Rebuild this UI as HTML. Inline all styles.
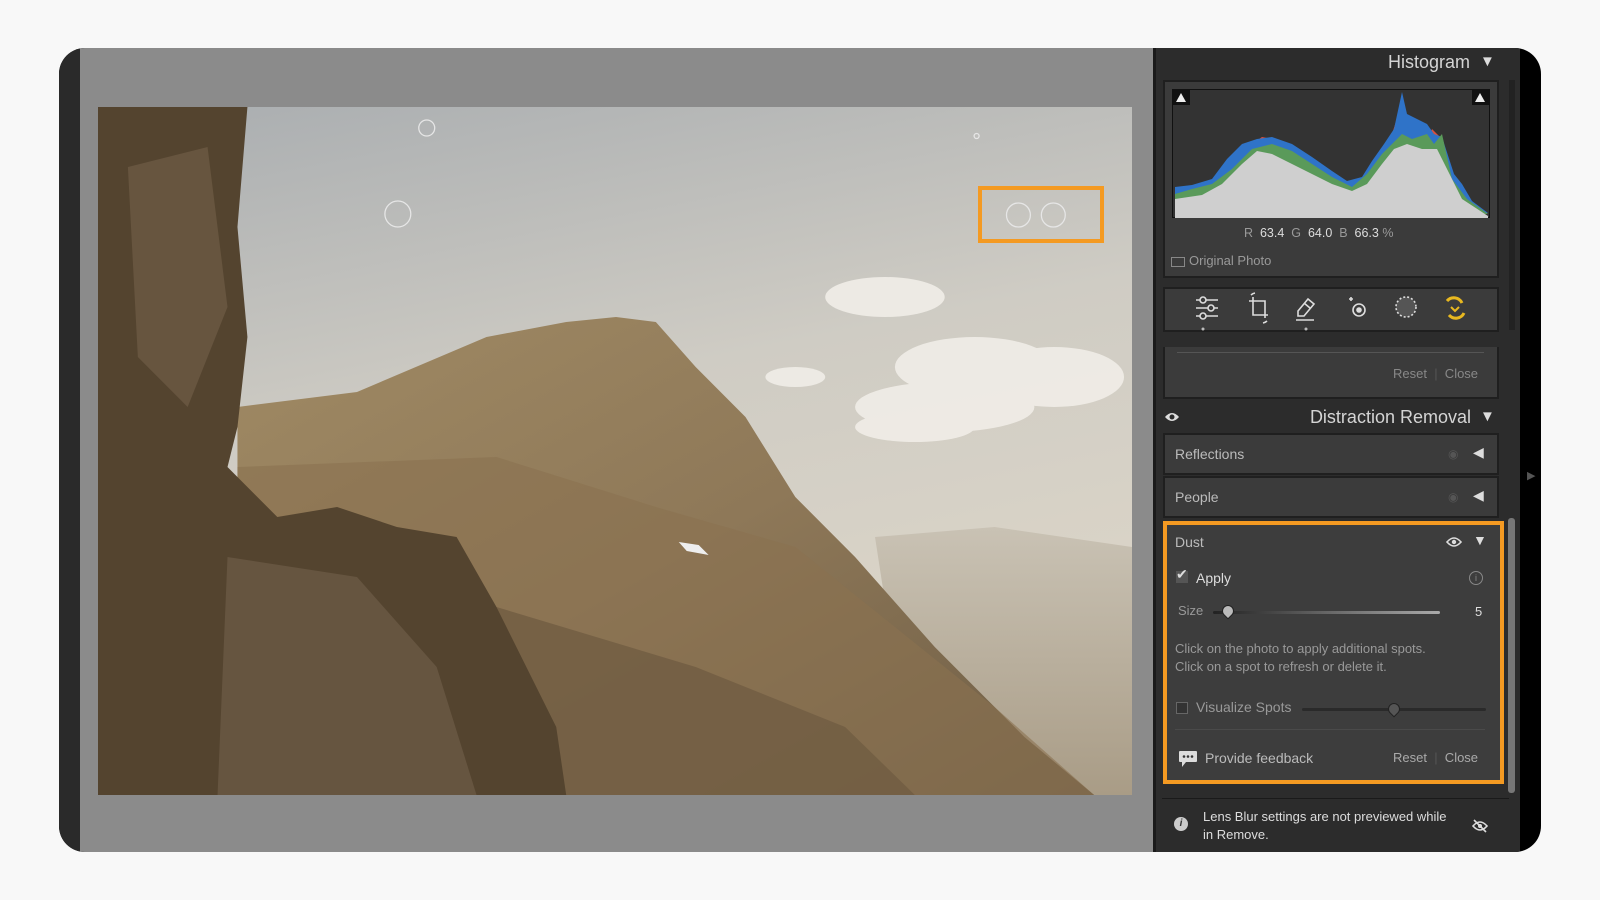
<!DOCTYPE html>
<html><head><meta charset="utf-8"><style>
*{margin:0;padding:0;box-sizing:border-box}
body{width:1600px;height:900px;background:#f8f8f8;font-family:"Liberation Sans",sans-serif;position:relative;overflow:hidden}
.abs{position:absolute}
.frame{left:59px;top:48px;width:1482px;height:804px;border-radius:26px;overflow:hidden;background:#000}
.t{color:#c9c9c9;font-size:14px;position:absolute;white-space:nowrap}
.box{position:absolute;background:#3b3b3b;border:2px solid #1f1f1f}
</style></head><body>
<div class="abs frame">
 <div class="abs" style="left:0;top:0;width:22px;height:804px;background:#2a2a2a"></div>
 <div class="abs" style="left:21px;top:0;width:1073px;height:804px;background:#8b8b8b"></div>
 <div class="abs" style="left:1094px;top:0;width:367px;height:804px;background:#2c2c2c;border-left:3px solid #1a1a1a"></div>
</div>
<!-- photo -->
<svg class="abs" style="left:98px;top:107px" width="1034" height="688" viewBox="0 0 1038 688" preserveAspectRatio="none">
 <defs>
  <linearGradient id="sky" x1="0" y1="0" x2="0.3" y2="1"><stop offset="0" stop-color="#a9adb0"/><stop offset=".5" stop-color="#cfccc4"/><stop offset="1" stop-color="#ddd6c8"/></linearGradient>
  <linearGradient id="mt" x1="0" y1="0" x2="1" y2="1"><stop offset="0" stop-color="#a08a64"/><stop offset=".5" stop-color="#8e7858"/><stop offset="1" stop-color="#6e5d45"/></linearGradient>
  <linearGradient id="haze" x1="0" y1="0" x2="0" y2="1"><stop offset="0" stop-color="#c9c2b4"/><stop offset="1" stop-color="#a99c86"/></linearGradient>
 </defs>
 <rect width="1038" height="688" fill="url(#sky)"/>
 <g fill="#f1eee8" opacity=".9">
  <ellipse cx="790" cy="190" rx="60" ry="20"/><ellipse cx="880" cy="260" rx="80" ry="30"/><ellipse cx="850" cy="300" rx="90" ry="25"/><ellipse cx="960" cy="270" rx="70" ry="30"/><ellipse cx="820" cy="320" rx="60" ry="15"/><ellipse cx="700" cy="270" rx="30" ry="10"/>
 </g>
 <path d="M780 430 L900 420 L1038 440 L1038 688 L820 688 Z" fill="url(#haze)"/>
 <path d="M140 300 L260 285 L390 230 L470 215 L520 210 L560 215 L600 260 L650 310 L700 390 L760 450 L840 540 L930 630 L1000 688 L140 688 Z" fill="url(#mt)"/>
 <path d="M140 360 L400 350 L560 400 L700 440 L800 520 L900 600 L1000 688 L140 688Z" fill="#8a7250" opacity=".6"/>
 <path d="M140 520 L400 500 L600 560 L750 620 L820 688 L140 688Z" fill="#705d42" opacity=".8"/>
 <path d="M0 0 L150 0 L140 120 L150 230 L140 320 L130 360 L180 410 L240 400 L300 420 L360 430 L400 500 L430 560 L460 620 L470 688 L0 688 Z" fill="#54442f"/>
 <path d="M30 60 L110 40 L130 200 L90 300 L40 250Z" fill="#7a6650" opacity=".5"/>
 <path d="M130 450 L260 470 L340 560 L380 688 L120 688Z" fill="#665540"/>
 <path d="M583 435 l20 3 l10 10 l-22 -4z" fill="#eee"/>
 <g fill="none" stroke="#e6e6e6" stroke-width="1.3">
  <circle cx="330" cy="21" r="8"/><circle cx="301" cy="107" r="13"/><circle cx="882" cy="29" r="2.5"/>
  <circle cx="924" cy="108" r="12"/><circle cx="959" cy="108" r="12"/>
 </g>
</svg>
<div class="abs" style="left:978px;top:186px;width:126px;height:57px;border:4px solid #f49a22"></div>
<!-- right panel -->
<div class="t" style="right:130px;top:52px;font-size:18px;color:#d4d4d4">Histogram</div>
<div class="t" style="left:1480px;top:53px;font-size:15px;color:#ddd">▼</div>
<div class="box" style="left:1163px;top:80px;width:336px;height:198px"></div>
<svg class="abs" style="left:1172px;top:89px" width="318" height="129" viewBox="0 0 318 129">
 <rect width="318" height="129" fill="#333" stroke="#111" stroke-width="2"/>
 <path d="M3 125 L3 100 L20 98 L40 95 L60 80 L80 55 L90 48 L100 50 L120 60 L140 70 L160 85 L180 95 L190 95 L200 80 L210 60 L220 45 L228 20 L232 30 L240 40 L255 55 L260 40 L270 50 L280 90 L290 100 L300 115 L316 125 Z" fill="#d85040"/>
 <path d="M3 125 L3 98 L20 96 L40 90 L55 70 L70 55 L85 50 L100 48 L120 55 L140 68 L160 82 L175 92 L190 88 L200 72 L212 55 L222 40 L230 3 L235 25 L245 30 L255 35 L262 45 L270 48 L282 85 L290 95 L300 112 L316 124 Z" fill="#2f73c8"/>
 <path d="M3 125 L3 105 L20 100 L40 95 L60 80 L80 60 L100 55 L120 62 L140 75 L160 88 L180 98 L195 85 L210 65 L220 55 L230 45 L240 50 L255 45 L262 55 L270 45 L280 90 L295 110 L316 125 Z" fill="#5a9a5a"/>
 <path d="M3 125 L3 110 L30 106 L50 95 L70 75 L85 62 L100 65 L120 75 L140 85 L160 95 L180 102 L195 95 L210 75 L222 60 L235 55 L250 60 L265 60 L275 80 L290 110 L316 127 L316 129 L3 129Z" fill="#cfcfcf"/>
 <rect x="1" y="1" width="17" height="15" fill="#111"/><path d="M4 13 L9 4 L14 13Z" fill="#eee"/>
 <rect x="300" y="1" width="17" height="15" fill="#111"/><path d="M303 13 L308 4 L313 13Z" fill="#eee"/>
</svg>
<div class="t" style="left:1244px;top:226px;font-size:12.5px;color:#9a9a9a">R &nbsp;<b style="color:#ddd;font-weight:normal">63.4</b> &nbsp;G &nbsp;<span style="color:#ddd">64.0</span> &nbsp;B &nbsp;<span style="color:#ddd">66.3</span> %</div>
<div class="abs" style="left:1171px;top:257px;width:14px;height:10px;border:1px solid #888"></div>
<div class="t" style="left:1189px;top:253px;font-size:13px;color:#999">Original Photo</div>
<div class="box" style="left:1163px;top:287px;width:336px;height:45px"></div>
<svg class="abs" style="left:1163px;top:287px" width="336" height="45" viewBox="0 0 336 45" fill="none" stroke="#ddd" stroke-width="1.6">
 <path d="M33 13h22M33 21h22M33 29h22"/><circle cx="40" cy="13" r="3" fill="#3b3b3b"/><circle cx="48" cy="21" r="3" fill="#3b3b3b"/><circle cx="40" cy="29" r="3" fill="#3b3b3b"/>
 <path d="M90 10v18h15M86 14h16v17"/><path d="M88 8a8 8 0 0 1 4-2M104 34a8 8 0 0 1-4 2"/>
 <path d="M135 24l10-12 6 5-10 12h-6zM133 33h18" fill="none"/><path d="M141 16l6 5" />
 <circle cx="196" cy="23" r="6"/><circle cx="196" cy="23" r="2" fill="#ddd"/><path d="M188 10v4M186 12h4"/>
 <circle cx="243" cy="20" r="10" stroke-dasharray="2 2" fill="#555"/>
 <path d="M284 14a9 9 0 0 1 15 2M301 26a9 9 0 0 1-15 2" stroke="#e8b820" stroke-width="3"/><path d="M288 20l4 4 4-4" stroke="#e8b820" stroke-width="2"/>
 <circle cx="40" cy="42" r="1.5" fill="#bbb" stroke="none"/><circle cx="143" cy="42" r="1.5" fill="#bbb" stroke="none"/>
</svg>
<div class="box" style="left:1163px;top:347px;width:336px;height:52px;border-top:none"></div>
<div class="abs" style="left:1177px;top:352px;width:307px;height:1px;background:#555"></div>
<div class="t" style="left:1393px;top:366px;font-size:13px;color:#888">Reset &nbsp;<span style="color:#555">|</span>&nbsp; Close</div>
<svg class="abs" style="left:1164px;top:411px" width="16" height="12" viewBox="0 0 16 12"><path d="M1 6Q8-2 15 6Q8 14 1 6Z" fill="#ddd"/><circle cx="8" cy="6" r="2.5" fill="#2c2c2c"/></svg>
<div class="t" style="right:129px;top:407px;font-size:18px;color:#d4d4d4">Distraction Removal</div>
<div class="t" style="left:1480px;top:408px;font-size:15px;color:#ddd">▼</div>
<div class="box" style="left:1163px;top:433px;width:336px;height:42px"></div>
<div class="t" style="left:1175px;top:446px;font-size:14px;color:#bbb">Reflections</div>
<div class="t" style="left:1448px;top:447px;font-size:12px;color:#555">◉</div><div class="t" style="left:1473px;top:444px;font-size:14px;color:#ddd">◀</div>
<div class="box" style="left:1163px;top:476px;width:336px;height:42px"></div>
<div class="t" style="left:1175px;top:489px;font-size:14px;color:#bbb">People</div>
<div class="t" style="left:1448px;top:490px;font-size:12px;color:#555">◉</div><div class="t" style="left:1473px;top:487px;font-size:14px;color:#ddd">◀</div>
<div class="abs" style="left:1163px;top:521px;width:341px;height:263px;border:4px solid #f49a22;background:#3d3d3d"></div>
<div class="t" style="left:1175px;top:534px;font-size:14px;color:#bbb">Dust</div>
<svg class="abs" style="left:1446px;top:536px" width="16" height="12" viewBox="0 0 16 12"><path d="M1 6Q8-2 15 6Q8 14 1 6Z" fill="none" stroke="#ddd" stroke-width="1.6"/><circle cx="8" cy="6" r="2.2" fill="#ddd"/></svg>
<div class="t" style="left:1473px;top:532px;font-size:14px;color:#ddd">▼</div>
<div class="abs" style="left:1176px;top:571px;width:12px;height:12px;background:#555"></div>
<div class="t" style="left:1176px;top:566px;font-size:14px;color:#ddd">✔</div>
<div class="t" style="left:1196px;top:570px;font-size:14px;color:#ddd">Apply</div>
<div class="abs" style="left:1469px;top:571px;width:14px;height:14px;border:1px solid #888;border-radius:50%;font-size:9px;color:#888;text-align:center;line-height:12px">i</div>
<div class="t" style="left:1178px;top:603px;font-size:13px;color:#999">Size</div>
<div class="abs" style="left:1213px;top:611px;width:227px;height:3px;background:linear-gradient(90deg,#222,#aaa);border-radius:2px"></div>
<div class="abs" style="left:1222px;top:605px;width:12px;height:12px;background:#bbb;border-radius:50% 50% 50% 0;transform:rotate(-45deg);border:1px solid #222"></div>
<div class="t" style="left:1475px;top:604px;font-size:13px;color:#ddd">5</div>
<div class="t" style="left:1175px;top:640px;font-size:13px;color:#999;line-height:18px">Click on the photo to apply additional spots.<br>Click on a spot to refresh or delete it.</div>
<div class="abs" style="left:1176px;top:702px;width:12px;height:12px;border:1px solid #666;background:#333"></div>
<div class="t" style="left:1196px;top:699px;font-size:14px;color:#999">Visualize Spots</div>
<div class="abs" style="left:1302px;top:708px;width:184px;height:3px;background:#2a2a2a;border-radius:2px"></div>
<div class="abs" style="left:1388px;top:703px;width:12px;height:12px;background:#555;border-radius:50% 50% 50% 0;transform:rotate(-45deg);border:1px solid #222"></div>
<div class="abs" style="left:1175px;top:729px;width:310px;height:1px;background:#4a4a4a"></div>
<svg class="abs" style="left:1178px;top:750px" width="20" height="19" viewBox="0 0 20 19"><path d="M2 1h16a1 1 0 0 1 1 1v9a1 1 0 0 1-1 1h-10l-4 5v-5h-2a1 1 0 0 1-1-1v-9a1 1 0 0 1 1-1z" fill="#ddd"/><circle cx="6" cy="6.5" r="1.3" fill="#333"/><circle cx="10" cy="6.5" r="1.3" fill="#333"/><circle cx="14" cy="6.5" r="1.3" fill="#333"/></svg>
<div class="t" style="left:1205px;top:750px;font-size:14px;color:#bbb">Provide feedback</div>
<div class="t" style="left:1393px;top:750px;font-size:13px;color:#aaa">Reset &nbsp;<span style="color:#555">|</span>&nbsp; Close</div>
<div class="abs" style="left:1162px;top:798px;width:347px;height:1px;background:#1a1a1a"></div>
<div class="abs" style="left:1174px;top:817px;width:14px;height:14px;background:#ccc;border-radius:50%;font-size:10px;color:#333;text-align:center;line-height:14px;font-style:italic;font-weight:bold">i</div>
<div class="t" style="left:1203px;top:808px;font-size:13px;color:#ddd;line-height:18px">Lens Blur settings are not previewed while<br>in Remove.</div>
<svg class="abs" style="left:1472px;top:819px" width="16" height="14" viewBox="0 0 16 14"><path d="M1 7Q8-1 15 7Q8 15 1 7Z" fill="none" stroke="#ddd" stroke-width="1.6"/><circle cx="8" cy="7" r="2" fill="#ddd"/><path d="M2 1l12 12" stroke="#ddd" stroke-width="1.6"/></svg>
<div class="abs" style="left:1509px;top:80px;width:6px;height:250px;background:#222"></div>
<div class="abs" style="left:1508px;top:518px;width:7px;height:275px;background:#777;border-radius:3px"></div>
<div class="t" style="left:1527px;top:469px;font-size:11px;color:#555">▶</div>
</body></html>
